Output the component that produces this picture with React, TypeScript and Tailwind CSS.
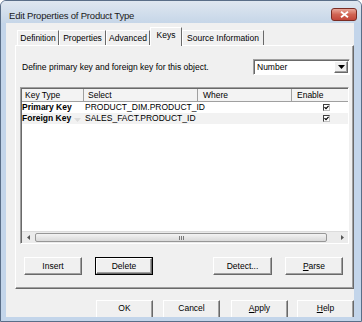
import React from 'react';

// classic raised bevel used by tabs, buttons and header cells
const raised =
  'bg-[#f0f0f0] border border-t-white border-l-white border-r-[#696969] border-b-[#696969] shadow-[inset_-1px_-1px_0_#a0a0a0]';

const Btn = ({ label, w, className = '', def = false, u, pad = '' }: { label: string; w: string; className?: string; def?: boolean; u?: boolean; pad?: string }) => (
  <div className={`${w} h-full ${className} ${def ? 'border border-black' : ''}`}>
    <div className={`${raised} h-full flex items-center justify-center text-[8.5px] leading-none ${pad}`}>
      {u ? (
        <span>
          <span className="underline">{label[0]}</span>
          {label.slice(1)}
        </span>
      ) : (
        label
      )}
    </div>
  </div>
);

const Tab = ({ label, w, active = false }: { label: string; w: string; active?: boolean }) => (
  <div
    className={`${w} flex items-center justify-center text-[8.5px] leading-none bg-[#f0f0f0] border-t border-l border-r border-t-white border-l-white border-r-[#696969] ${
      active ? 'h-[19px] mb-[-1px] relative z-10 pb-[3px]' : 'h-[15px]'
    }`}
  >
    {label}
  </div>
);

const Check = () => (
  <div className="w-[7px] h-[7px] bg-white border border-t-[#404040] border-l-[#404040] border-r-[#c0c0c0] border-b-[#c0c0c0] flex items-center justify-center">
    <svg width="5" height="5" viewBox="0 0 5 5">
      <path d="M0.5 2.2 L2 3.7 L4.6 0.8" stroke="#000" strokeWidth="1.2" fill="none" />
    </svg>
  </div>
);

const rows = [
  { type: 'Primary Key', select: 'PRODUCT_DIM.PRODUCT_ID', bg: 'bg-white' },
  { type: 'Foreign Key', select: 'SALES_FACT.PRODUCT_ID', bg: 'bg-[#f2f2f2]' },
];

export default function App() {
  return (
    <div className="w-[362px] h-[322px] overflow-hidden bg-[#c3d5ea] border border-[#5a6e88] rounded-t-[6px] flex flex-col font-['Liberation_Sans',Arial,sans-serif] text-black">
      {/* title bar */}
      <div className="h-[22px] shrink-0 flex items-end justify-between pl-[8px] pr-[4px] pb-[2px] bg-gradient-to-b from-[#dfe7f0] to-[#c6d6e8]">
        <span className="text-[9.5px] leading-[10px] tracking-[-0.2px] text-[#1a1a1a]">Edit Properties of Product Type</span>
        <div className="w-[26px] h-[13px] rounded-[3px] border border-[#7a2c23] bg-gradient-to-b from-[#e9a89b] via-[#d06453] to-[#c2463a] flex items-center justify-center">
          <svg width="9" height="7" viewBox="0 0 9 7">
            <path d="M1 0.8 L8 6.2 M8 0.8 L1 6.2" stroke="#fff" strokeWidth="1.8" />
          </svg>
        </div>
      </div>

      {/* client area */}
      <div className="ml-[5px] w-[348px] h-[294px] shrink-0 bg-[#f0f0f0] flex flex-col overflow-hidden">
        {/* tab strip */}
        <div className="h-[22px] shrink-0 flex items-end pl-[11px]">
          <Tab label="Definition" w="w-[42px]" />
          <Tab label="Properties" w="w-[47px]" />
          <Tab label="Advanced" w="w-[44px]" />
          <Tab label="Keys" w="w-[32px]" active />
          <Tab label="Source Information" w="w-[82px]" />
        </div>

        {/* tab page */}
        <div className="ml-[9px] w-[339px] h-[244px] shrink-0 bg-[#f0f0f0] border border-t-white border-l-white border-r-[#696969] border-b-[#696969] shadow-[inset_-1px_-1px_0_#a0a0a0] flex flex-col">
          <div className="mt-[13px] h-[16px] flex items-center">
            <span className="ml-[6px] text-[8.5px] leading-none">Define primary key and foreign key for this object.</span>
            <div className="ml-auto mr-[3px] w-[97px] h-[16px] bg-white border border-t-[#a0a0a0] border-l-[#a0a0a0] border-r-white border-b-white shadow-[inset_1px_1px_0_#696969] flex items-center">
              <span className="pl-[3px] text-[8.5px] leading-none flex-1">Number</span>
              <div className={`${raised} w-[14px] h-[12px] mr-[1px] flex items-center justify-center`}>
                <svg width="7" height="4" viewBox="0 0 7 4">
                  <path d="M0 0 H7 L3.5 4 Z" fill="#000" />
                </svg>
              </div>
            </div>
          </div>

          {/* list view */}
          <div className="mt-[12px] ml-[4px] w-[329px] h-[157px] bg-white border border-t-[#a0a0a0] border-l-[#a0a0a0] border-r-white border-b-white shadow-[inset_1px_1px_0_#696969] pt-[1px] pl-[1px] flex flex-col">
            <div className="h-[13px] flex text-[8.5px] leading-none border-b border-[#a0a0a0] bg-[#f3f3f3]">
              <div className="w-[62px] pl-[3px] flex items-center border-r border-[#a0a0a0]">Key Type</div>
              <div className="w-[114px] pl-[4px] flex items-center border-r border-[#a0a0a0]">Select</div>
              <div className="w-[94px] pl-[5px] flex items-center border-r border-[#a0a0a0]">Where</div>
              <div className="flex-1 pl-[5px] flex items-center">Enable</div>
            </div>
            {rows.map((r) => (
              <div key={r.type} className={`h-[11px] flex items-center text-[8.5px] leading-none ${r.bg}`}>
                <div className="w-[62px] font-bold flex items-center">
                  {r.type}
                  {r.type === 'Foreign Key' && (
                    <svg width="7" height="4" viewBox="0 0 7 4" className="ml-[3px] mt-[3px]">
                      <path d="M0 0 H7 L3.5 4 Z" fill="#dcdcdc" />
                    </svg>
                  )}
                </div>
                <div className="w-[114px] pl-[1px]">{r.select}</div>
                <div className="w-[94px]" />
                <div className="flex-1 pl-[31px]">
                  <Check />
                </div>
              </div>
            ))}
            <div className="flex-1" />
            {/* horizontal scrollbar */}
            <div className="h-[12px] flex items-center bg-[#ebebeb] border-t border-[#dcdcdc]">
              <div className="w-[12px] h-full flex items-center justify-center">
                <svg width="3" height="5" viewBox="0 0 3 5">
                  <path d="M3 0 V5 L0 2.5 Z" fill="#555" />
                </svg>
              </div>
              <div className="flex-1 h-full flex items-center">
                <div className="ml-[1px] w-[292px] h-[9px] rounded-[2px] border border-[#979797] bg-gradient-to-b from-[#f4f4f4] to-[#d9d9d9] flex items-center justify-center gap-[1px]">
                  <div className="w-px h-[4px] bg-[#7a7a7a]" />
                  <div className="w-px h-[4px] bg-[#7a7a7a]" />
                  <div className="w-px h-[4px] bg-[#7a7a7a]" />
                </div>
              </div>
              <div className="w-[12px] h-full flex items-center justify-center">
                <svg width="3" height="5" viewBox="0 0 3 5">
                  <path d="M0 0 V5 L3 2.5 Z" fill="#555" />
                </svg>
              </div>
            </div>
          </div>

          {/* panel buttons */}
          <div className="mt-[13px] h-[18px] flex">
            <Btn label="Insert" w="w-[58px]" className="ml-[8px]" />
            <Btn label="Delete" w="w-[58px]" className="ml-[13px]" def />
            <Btn label="Detect..." w="w-[59px]" className="ml-[60px]" />
            <Btn label="Parse" w="w-[58px]" className="ml-[13px]" u />
          </div>
        </div>

        {/* dialog buttons, cut off by the window's bottom edge */}
        <div className="mt-[11px] h-[22px] shrink-0 flex">
          <Btn label="OK" w="w-[57px]" className="ml-[90px]" pad="pb-[5px]" />
          <Btn label="Cancel" w="w-[57px]" className="ml-[10px]" pad="pb-[5px]" />
          <Btn label="Apply" w="w-[57px]" className="ml-[11px]" u pad="pb-[5px]" />
          <Btn label="Help" w="w-[57px]" className="ml-[9px]" u pad="pb-[5px]" />
        </div>
      </div>
    </div>
  );
}
